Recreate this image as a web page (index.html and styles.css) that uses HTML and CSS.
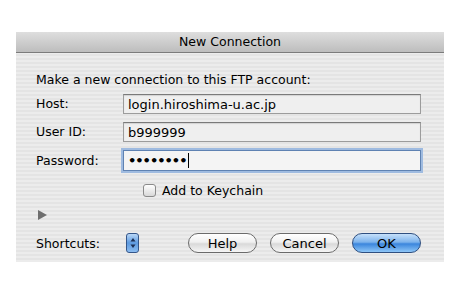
FILE: index.html
```html
<!doctype html>
<html lang="en">
    <head>
        <meta charset="UTF-8">
        <title>New Connection</title>
        <link rel="stylesheet" href="styles.css">
    </head>
    <body>
        <div class="window">
            <div class="title-bar">New Connection</div>

            <div class="content">
                <p class="intro">Make a new connection to this FTP account:</p>

                <div class="form">
                    <label>Host:</label>
                    <div class="field">login.hiroshima-u.ac.jp</div>

                    <label>User ID:</label>
                    <div class="field">b999999</div>

                    <label>Password:</label>
                    <div class="field focused">&bull;&bull;&bull;&bull;&bull;&bull;&bull;&bull;<span class="caret"></span></div>
                </div>

                <div class="keychain">
                    <span class="checkbox"></span>
                    <span>Add to Keychain</span>
                </div>

                <div class="disclosure"></div>

                <div class="footer">
                    <span class="shortcuts-label">Shortcuts:</span>
                    <span class="stepper">
                        <svg width="6" height="12" viewBox="0 0 6 12">
                            <path d="M3 1 L5.5 4.5 L0.5 4.5 Z M3 11 L5.5 7.5 L0.5 7.5 Z" fill="#1b2f55"/>
                        </svg>
                    </span>
                    <div class="buttons">
                        <button class="btn">Help</button>
                        <button class="btn">Cancel</button>
                        <button class="btn default">OK</button>
                    </div>
                </div>
            </div>
        </div>
    </body>
</html>
```

FILE: styles.css
```css
* {
    box-sizing: border-box;
}
html {
    font-family: "DejaVu Sans", sans-serif;
    font-size: 12.5px;
    color: #000;
    background-color: #fff;
}
body {
    margin: 0;
    padding: 32px 0 0 16px;
}

/* Fenetre */
.window {
    width: 428px;
    height: 230px;
    background-color: #e9e9e9;
    background-image: repeating-linear-gradient(
        to bottom,
        #ececec 0px,
        #ececec 2px,
        #e4e4e4 2px,
        #e4e4e4 4px
    );
}

.title-bar {
    height: 21px;
    line-height: 20px;
    text-align: center;
    background: linear-gradient(to bottom, #dedede, #bdbdbd);
    border-bottom: 1px solid #7b7b7b;
}

.content {
    padding: 17px 23px 0 20px;
}

.intro {
    margin: 0;
    height: 20px;
    line-height: 20px;
}

/* Champs */
.form {
    display: grid;
    grid-template-columns: 87px 1fr;
    row-gap: 8px;
    align-items: center;
    margin-top: 4px;
}

.form label {
    line-height: 20px;
}

.field {
    height: 20px;
    line-height: 19px;
    padding: 0 4px;
    font-size: 13px;
    background-color: #efefef;
    border: 1px solid #9c9c9c;
    border-top-color: #7a7a7a;
    box-shadow: inset 0 1px 1px rgba(0, 0, 0, 0.12);
}

.field.focused {
    height: 21px;
    border: 1px solid #5f82b2;
    box-shadow: 0 0 0 2px #9fbbe0;
    background-color: #f4f4f4;
    letter-spacing: -1px;
    font-weight: bold;
}

.caret {
    display: inline-block;
    width: 1px;
    height: 15px;
    margin-left: 2px;
    vertical-align: -3px;
    background-color: #000;
}

/* Case a cocher */
.keychain {
    display: flex;
    align-items: center;
    gap: 6px;
    margin: 12px 0 0 107px;
}

.checkbox {
    width: 13px;
    height: 13px;
    border: 1px solid #8a8a8a;
    border-radius: 3px;
    background: linear-gradient(to bottom, #ffffff, #d8d8d8);
}

.disclosure {
    width: 0;
    height: 0;
    margin: 12px 0 0 2px;
    border-top: 5px solid transparent;
    border-bottom: 5px solid transparent;
    border-left: 9px solid #6e6e6e;
}

/* Bas de la fenetre */
.footer {
    display: flex;
    align-items: center;
    margin-top: 13px;
}

.shortcuts-label {
    width: 90px;
}

.stepper {
    display: flex;
    align-items: center;
    justify-content: center;
    width: 13px;
    height: 20px;
    border: 1px solid #34568a;
    border-radius: 3px;
    background: linear-gradient(to bottom, #b9d7f7, #5d9ae0 50%, #8bbcf0);
}

.buttons {
    display: flex;
    gap: 13px;
    margin-left: auto;
}

.btn {
    width: 69px;
    height: 20px;
    padding: 0;
    font-family: inherit;
    font-size: 13px;
    color: #000;
    border: 1px solid #6b6b6b;
    border-radius: 10px;
    background: linear-gradient(to bottom, #ffffff 0%, #f0f0f0 45%, #d9d9d9 55%, #f6f6f6 100%);
}

.btn.default {
    border-color: #2f4f80;
    background: linear-gradient(to bottom, #c6e0fa 0%, #7db3ec 45%, #3b86dd 55%, #8ec6f7 100%);
}
```
